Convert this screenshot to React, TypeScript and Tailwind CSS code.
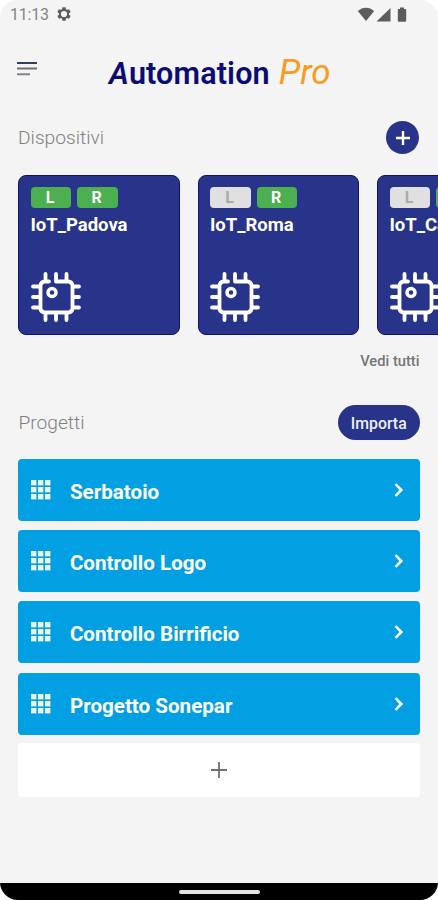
import clsx from "clsx";

const devices = [
  { name: "IoT_Padova", local: true },
  { name: "IoT_Roma", local: false },
  { name: "IoT_Catania", local: false },
];

const projects = [
  "Serbatoio",
  "Controllo Logo",
  "Controllo Birrificio",
  "Progetto Sonepar",
];

function StatusBar() {
  return (
    <div className="flex h-7 shrink-0 items-center justify-between pl-[10px] pr-[31px] text-[#5c5c5c]">
      <div className="flex items-center">
        <span className="mt-px w-[47px] text-[16px] leading-7 tracking-[-0.2px] text-[#858585]">
          11:13
        </span>
        <svg width="14" height="14" viewBox="2 2 20 20" fill="currentColor">
          <path d="M19.14 12.94c.04-.3.06-.61.06-.94s-.02-.64-.07-.94l2.03-1.58a.49.49 0 0 0 .12-.61l-1.92-3.32a.49.49 0 0 0-.59-.22l-2.39.96a7 7 0 0 0-1.62-.94l-.36-2.54a.48.48 0 0 0-.48-.41h-3.84a.48.48 0 0 0-.47.41l-.36 2.54c-.59.24-1.13.57-1.62.94l-2.39-.96a.48.48 0 0 0-.59.22L2.74 8.87a.47.47 0 0 0 .12.61l2.03 1.58a6 6 0 0 0 0 1.88l-2.03 1.58a.49.49 0 0 0-.12.61l1.92 3.32c.12.22.37.29.59.22l2.39-.96c.5.38 1.03.7 1.62.94l.36 2.54c.05.24.24.41.48.41h3.84c.24 0 .44-.17.47-.41l.36-2.54a7 7 0 0 0 1.62-.94l2.39.96c.22.08.47 0 .59-.22l1.92-3.32a.47.47 0 0 0-.12-.61zM12 16.4a4.4 4.4 0 1 1 0-8.8 4.4 4.4 0 0 1 0 8.8z" />
        </svg>
      </div>
      <svg width="50" height="15" viewBox="0 0 50 15" fill="currentColor">
        <path d="M9 14 .8 4.1C3.200 2 6 .8 9 .8s5.800 1.200 8.200 3.300z" />
        <path d="M33.500 1v13.500h-14z" />
        <path d="M43 .5h4v1.500h1.200q1 0 1 1v10.800q0 1-1 1h-6.400q-1 0-1-1V3q0-1 1-1H43z" />
      </svg>
    </div>
  );
}

function ChipIcon() {
  return (
    <svg
      width="50"
      height="50"
      viewBox="0 0 50 50"
      fill="none"
      stroke="white"
      strokeWidth="3.8"
      strokeLinecap="round"
      strokeLinejoin="round"
    >
      <path d="M18 9.500h-4.500a4 4 0 0 0-4 4v23a4 4 0 0 0 4 4h24a4 4 0 0 0 4-4v-23a4 4 0 0 0-4-4H25V2M14.500 2v7M35.500 2v7M14.500 41v7M25 41v7M35.500 41v7M2 14.500h6M2 25h6M2 35.500h6M42 14.500h6M42 25h6M42 35.500h6" />
      {/* fills the bends so the inside of the package stays square */}
      <path
        d="M12.500 12.500h-2v-2h2zM38.500 12.500h2v-2h-2zM12.500 37.500h-2v2h2zM38.500 37.500h2v2h-2z"
        fill="white"
        stroke="none"
      />
      <circle cx="21" cy="20.500" r="4" strokeWidth="3.500" />
    </svg>
  );
}

function Badge({ label, active }: { label: string; active: boolean }) {
  return (
    <span
      className={clsx(
        "flex h-[21px] w-[40.5px] items-center justify-center rounded-[4px] pr-[2px] pt-px text-[16px] font-bold",
        active ? "bg-[#4caf50] text-white" : "bg-[#e0e0e0] text-[#aaaaaa]"
      )}
    >
      {label}
    </span>
  );
}

function DeviceCard({ name, local }: { name: string; local: boolean }) {
  return (
    <div className="flex h-40 w-[161.5px] shrink-0 flex-col rounded-[8px] border border-[#10107c] bg-[#28338a] pl-[11.5px] pt-[11px]">
      <div className="flex shrink-0 gap-[6px]">
        <Badge label="L" active={local} />
        <Badge label="R" active />
      </div>
      <div className="-ml-[0.5px] mt-[5px] whitespace-nowrap text-[18.5px] font-bold leading-[24px] text-white">
        {name}
      </div>
      <div className="mt-[35px]">
        <ChipIcon />
      </div>
    </div>
  );
}

function GridIcon() {
  return (
    <svg width="20" height="20" viewBox="0 0 20 20" fill="#e9f5fd">
      {[0, 7, 14].map((y) =>
        [0, 7, 14].map((x) => (
          <rect key={`${x}-${y}`} x={x} y={y} width="5.4" height="5.4" />
        ))
      )}
    </svg>
  );
}

function ProjectRow({ name }: { name: string }) {
  return (
    <div className="flex h-[62px] items-center rounded-[4px] bg-[#029fe3] pl-[12.5px] pr-[16.5px] text-white">
      <GridIcon />
      <span className="ml-[19px] mt-[4px] flex-1 text-[20.6px] font-bold leading-6">{name}</span>
      <svg
        width="10"
        height="14"
        viewBox="0 0 10 14"
        fill="none"
        stroke="currentColor"
        strokeWidth="2.6"
      >
        <path d="m1.500 1.200 5.800 5.800-5.800 5.800" />
      </svg>
    </div>
  );
}

export default function App() {
  return (
    <div className="h-[900px] w-[438px] overflow-hidden bg-white font-[Roboto,sans-serif]">
      <div className="flex h-full flex-col overflow-hidden rounded-[18px] bg-[#f4f4f4]">
        <StatusBar />

        <header className="flex h-[82px] shrink-0 items-start pl-[17px] pt-[34px]">
          <svg width="20" height="14" viewBox="0 0 20 14" strokeWidth="2">
            <path d="M0 1h20" stroke="#344055" />
            <path d="M0 6.500h20" stroke="#6b7079" />
            <path d="M0 12.200h13" stroke="#858585" />
          </svg>
          <h1 className="-mt-[9px] ml-[72px] flex items-baseline leading-10">
            <span className="text-[30.5px] font-semibold tracking-[0.15px] text-[#0b0b78]">
              <i>A</i>utomation
            </span>
            <span className="ml-[9px] text-[35px] italic text-[#fb9a1c]">Pro</span>
          </h1>
        </header>

        <section className="shrink-0">
          <div className="flex h-[55px] items-center justify-between pl-[18px] pr-[19px]">
            <h2 className="mt-[2px] text-[19.2px] font-light text-[#808080]">Dispositivi</h2>
            <button className="flex h-[33px] w-[33px] items-center justify-center rounded-full bg-[#28338a]">
              <svg width="14" height="14" viewBox="0 0 14 14" stroke="white" strokeWidth="2.4">
                <path d="M7 0v14M0 7h14" />
              </svg>
            </button>
          </div>
          <div className="mt-[9.5px] flex gap-[18px] overflow-hidden pl-[18.4px]">
            {devices.map((device) => (
              <DeviceCard key={device.name} {...device} />
            ))}
          </div>
          <div className="mt-[15.5px] pr-[18.5px] text-right text-[14.7px] font-medium leading-[22px] text-[#757575]">
            Vedi tutti
          </div>
        </section>

        <section className="mt-[33px] pl-[18.4px] pr-[18px]">
          <div className="flex h-[35px] items-center justify-between">
            <h2 className="mt-[2px] text-[19.2px] font-light text-[#808080]">Progetti</h2>
            <button className="h-[35px] w-[82.5px] rounded-full bg-[#28338a] pt-[3px] text-[15.8px] font-medium text-[#eef0ff]">
              Importa
            </button>
          </div>
          <div className="mt-[18.5px] flex flex-col gap-[9.4px]">
            {projects.map((name) => (
              <ProjectRow key={name} name={name} />
            ))}
            <button className="-mt-[0.6px] flex h-[54px] items-center justify-center rounded-[4px] bg-white">
              <svg width="16" height="16" viewBox="0 0 16 16" stroke="#6f6f73" strokeWidth="1.800">
                <path d="M8 0v16M0 8h16" />
              </svg>
            </button>
          </div>
        </section>

        <div className="mt-auto flex h-[17px] shrink-0 justify-center bg-black pt-[7px]">
          <div className="h-[4px] w-[81px] rounded-full bg-[#e4e4e4]" />
        </div>
      </div>
    </div>
  );
}
